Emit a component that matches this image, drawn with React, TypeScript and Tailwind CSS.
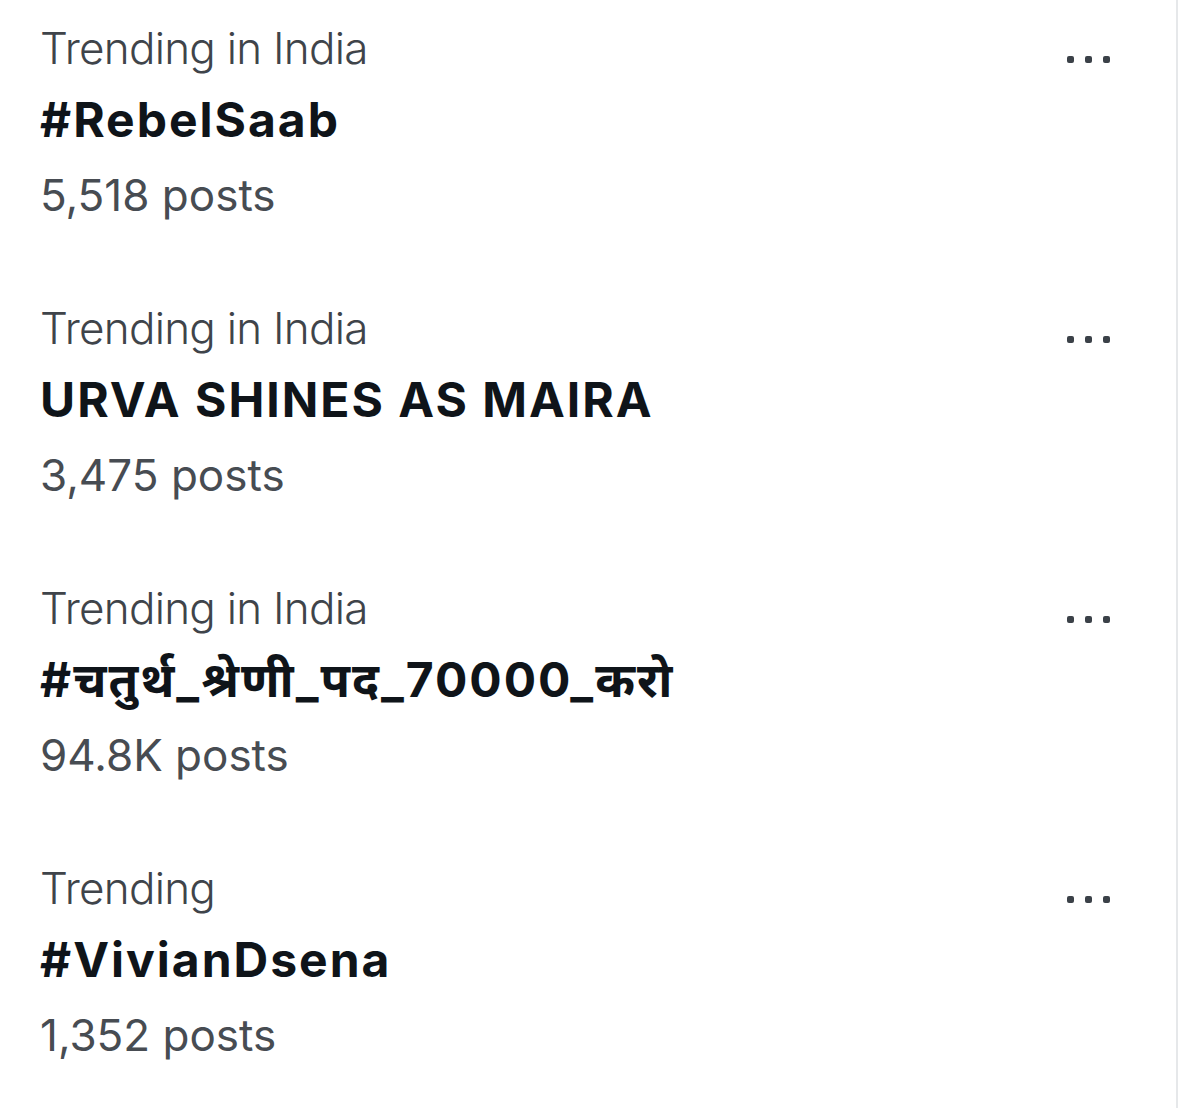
const trends = [
  { id: 1, context: "Trending in India", title: "#RebelSaab", posts: "5,518 posts" },
  { id: 2, context: "Trending in India", title: "URVA SHINES AS MAIRA", posts: "3,475 posts" },
  { id: 3, context: "Trending in India", title: "#चतुर्थ_श्रेणी_पद_70000_करो", posts: "94.8K posts" },
  { id: 4, context: "Trending", title: "#VivianDsena", posts: "1,352 posts" },
];

function MoreDots() {
  return (
    <div className="self-start flex items-center gap-[11px] mt-[42px]">
      <span className="block w-[7px] h-[7px] rounded-[2px] bg-[#3b4148]" />
      <span className="block w-[7px] h-[7px] rounded-[2px] bg-[#3b4148]" />
      <span className="block w-[7px] h-[7px] rounded-[2px] bg-[#3b4148]" />
    </div>
  );
}

export default function App() {
  return (
    <div className="w-[1200px] h-[1108px] bg-white overflow-hidden font-['Inter','Noto_Sans','Noto_Sans_Devanagari',sans-serif]">
      <div className="w-[1178px] h-full border-r-2 border-[#e6e8ea]">
        {trends.map((t) => (
          <div key={t.id} className="flex justify-between h-[280px] pt-[14px] pl-[40px] pr-[66px]">
            <div className="flex flex-col">
              <span className="text-[44px] leading-[68px] font-light text-[#3f444a] tracking-[-0.75px]">
                {t.context}
              </span>
              <span className="text-[48px] leading-[76px] font-bold text-[#0f1419] tracking-[2px]">
                {t.title}
              </span>
              <span className="text-[44px] leading-[74px] text-[#474c52]">
                {t.posts}
              </span>
            </div>
            <MoreDots />
          </div>
        ))}
      </div>
    </div>
  );
}
